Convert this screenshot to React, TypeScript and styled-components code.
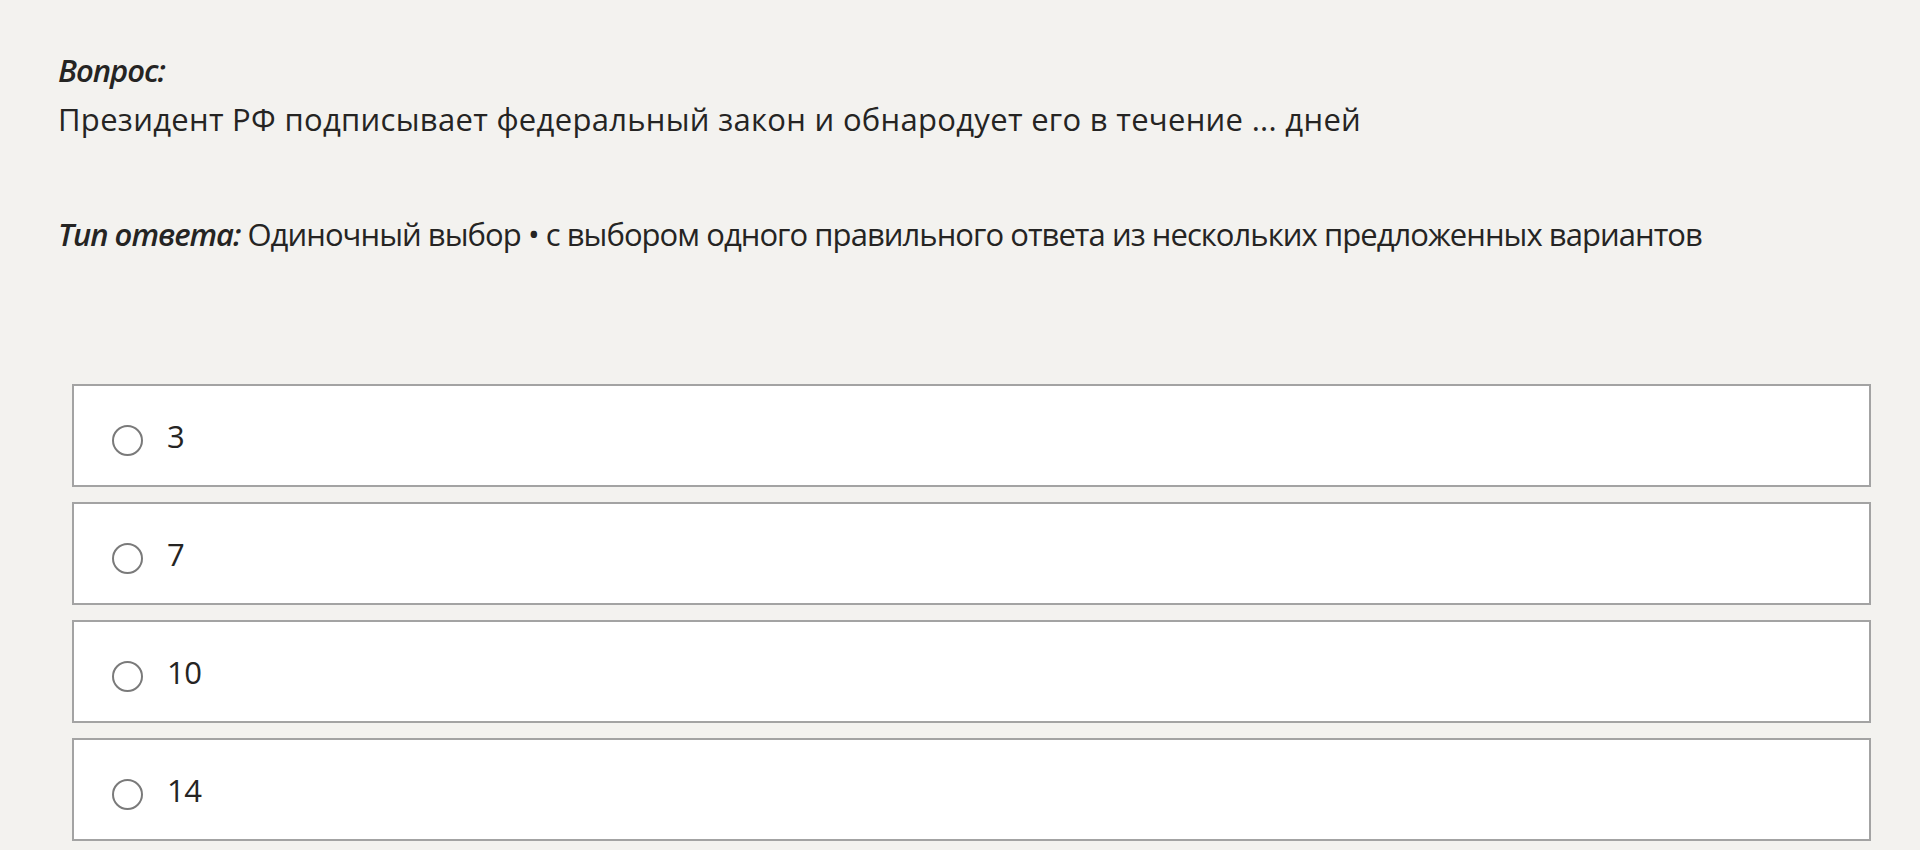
import React from 'react';
import styled, { createGlobalStyle } from 'styled-components';

const GlobalStyle = createGlobalStyle`
  html, body {
    margin: 0;
    padding: 0;
    background: #f3f2ef;
  }
  body {
    font-family: 'Open Sans', 'Noto Sans', sans-serif;
    color: #252423;
  }
`;

const Page = styled.div`
  padding: 50px 49px 0 58px;
`;

const Label = styled.span`
  font-style: italic;
  font-weight: 600;
  letter-spacing: -1px;
`;

const QuestionHead = styled.div`
  font-size: 31px;
  line-height: 40px;
`;

const QuestionText = styled.div`
  font-size: 31px;
  line-height: 40px;
  margin-top: 9px;
  letter-spacing: 0.3px;
`;

const AnswerType = styled.div`
  font-size: 31px;
  line-height: 40px;
  margin-top: 75px;
  letter-spacing: -0.95px;
`;

const Options = styled.div`
  display: flex;
  flex-direction: column;
  gap: 15px;
  margin: 130px 0 0 14px;
`;

const Option = styled.label`
  display: flex;
  align-items: center;
  height: 103px;
  box-sizing: border-box;
  background: #ffffff;
  border: 2px solid #a3a3a3;
  padding-left: 38px;
  cursor: pointer;
`;

const Radio = styled.span`
  width: 31px;
  height: 31px;
  box-sizing: border-box;
  border: 2px solid #7a7a7a;
  border-radius: 50%;
  margin-top: 10px;
  flex-shrink: 0;
`;

const OptionText = styled.span`
  font-size: 31px;
  line-height: 40px;
  margin-left: 24px;
  letter-spacing: -0.6px;
`;

const answers = ['3', '7', '10', '14'];

const App: React.FC = () => {
  return (
    <>
      <GlobalStyle />
      <Page>
        <QuestionHead>
          <Label>Вопрос:</Label>
        </QuestionHead>
        <QuestionText>
          Президент РФ подписывает федеральный закон и обнародует его в течение ... дней
        </QuestionText>
        <AnswerType>
          <Label>Тип ответа:</Label> Одиночный выбор • с выбором одного правильного ответа из нескольких
          предложенных вариантов
        </AnswerType>
        <Options>
          {answers.map((a) => (
            <Option key={a}>
              <Radio />
              <OptionText>{a}</OptionText>
            </Option>
          ))}
        </Options>
      </Page>
    </>
  );
};

export default App;
